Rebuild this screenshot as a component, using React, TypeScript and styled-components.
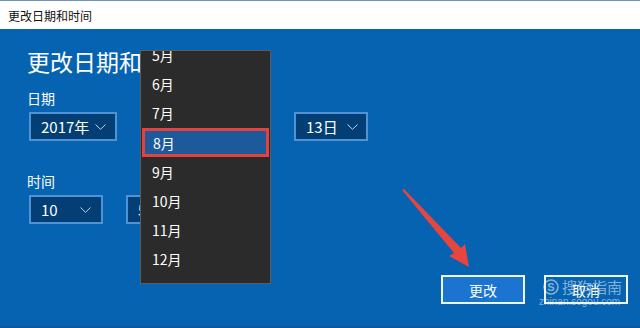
import styled, { createGlobalStyle } from 'styled-components';

const GlobalStyle = createGlobalStyle`
  html, body {
    margin: 0;
    padding: 0;
    width: 640px;
    height: 328px;
    overflow: hidden;
    font-family: "Noto Sans CJK SC", "Noto Sans", "Liberation Sans", sans-serif;
  }
`;

const Window = styled.div`
  position: relative;
  width: 640px;
  height: 328px;
  display: flex;
  flex-direction: column;
  background: #0563b2;
  box-sizing: border-box;
  border-top: 1px solid #6f95bd;
  border-bottom: 2px solid #0b58a0;
  overflow: hidden;
`;

const TitleBar = styled.div`
  height: 28px;
  flex: none;
  background: #ffffff;
  display: flex;
  align-items: center;
  padding-left: 8px;
  font-size: 12px;
  color: #111;
`;

const Body = styled.div`
  flex: 1;
  display: flex;
  flex-direction: column;
  padding: 17px 12px 22px 27px;
  color: #fff;
`;

const Heading = styled.div`
  font-size: 23px;
  line-height: 30px;
  white-space: nowrap;
`;

const Label = styled.div<{ $gap: number }>`
  margin-top: ${(p) => p.$gap}px;
  font-size: 14px;
  line-height: 20px;
`;

const Row = styled.div`
  margin: 4px 0 0 2px;
  display: flex;
  gap: 23px;
  position: relative;
`;

const Combo = styled.div<{ $w: number; $pad?: number }>`
  width: ${(p) => p.$w}px;
  height: 29px;
  box-sizing: border-box;
  border: 2px solid #4d93d6;
  background: #033f74;
  display: flex;
  align-items: center;
  justify-content: space-between;
  padding: 0 ${(p) => p.$pad ?? 9}px 0 10px;
  font-size: 15px;
  color: #fff;
`;

const Chevron = () => (
  <svg width="11" height="6" viewBox="0 0 11 6">
    <path d="M0.5 0.5 L5.5 5.3 L10.5 0.5" fill="none" stroke="#bcd3ea" strokeWidth="1" />
  </svg>
);

const Dropdown = styled.div`
  position: absolute;
  left: 140px;
  top: 49px;
  width: 131px;
  height: 234px;
  box-sizing: border-box;
  background: #2b2b2b;
  border: 1px solid #5d5d5d;
  overflow: hidden;
  z-index: 2;
`;

const List = styled.div`
  margin-top: -11px;
  display: flex;
  flex-direction: column;
`;

const Item = styled.div<{ $selected?: boolean }>`
  height: 29px;
  box-sizing: border-box;
  display: flex;
  align-items: center;
  font-size: 14px;
  color: #fff;
  padding-left: ${(p) => (p.$selected ? 8 : 11)}px;
  ${(p) =>
    p.$selected &&
    `
    margin: 1px 1px 0 1px;
    background: #1c5a9c;
    border: 3px solid #e6403f;
  `}
`;

const Footer = styled.div`
  margin-top: auto;
  display: flex;
  justify-content: flex-end;
  gap: 19px;
`;

const Button = styled.div<{ $primary?: boolean }>`
  width: 84px;
  height: 29px;
  box-sizing: border-box;
  border: 2px solid #eef4fb;
  background: ${(p) => (p.$primary ? '#1a74d0' : '#0563b2')};
  display: flex;
  align-items: center;
  justify-content: center;
  font-size: 14px;
  color: #fff;
`;

const Arrow = styled.svg`
  position: absolute;
  left: 0;
  top: 0;
  pointer-events: none;
  z-index: 3;
`;

const Watermark = styled.div`
  position: absolute;
  left: 543px;
  top: 277px;
  color: rgba(255, 255, 255, 0.5);
  z-index: 3;
  display: flex;
  flex-direction: column;
  align-items: flex-start;
  pointer-events: none;
`;

const MarkTop = styled.div`
  display: flex;
  align-items: center;
  gap: 3px;
  font-size: 15px;
  line-height: 18px;
`;

const MarkUrl = styled.div`
  font-family: "Liberation Sans", sans-serif;
  font-size: 10px;
  line-height: 11px;
  margin-left: -4px;
`;

const months = ['5月', '6月', '7月', '8月', '9月', '10月', '11月', '12月'];

export default function App() {
  return (
    <>
      <GlobalStyle />
      <Window>
        <TitleBar>更改日期和时间</TitleBar>
        <Body>
          <Heading>更改日期和时间</Heading>
          <Label $gap={12}>日期</Label>
          <Row>
            <Combo $w={88}>
              2017年 <Chevron />
            </Combo>
            <Combo $w={131}>
              8月 <Chevron />
            </Combo>
            <Combo $w={74} $pad={8}>
              13日 <Chevron />
            </Combo>
          </Row>
          <Label $gap={30}>时间</Label>
          <Row>
            <Combo $w={74} $pad={10}>
              10 <Chevron />
            </Combo>
            <Combo $w={74}>
              58 <Chevron />
            </Combo>
          </Row>
          <Footer>
            <Button $primary>更改</Button>
            <Button>取消</Button>
          </Footer>
        </Body>
        <Dropdown>
          <List>
            {months.map((m) => (
              <Item key={m} $selected={m === '8月'}>
                {m}
              </Item>
            ))}
          </List>
        </Dropdown>
        <Arrow width="640" height="328" viewBox="0 0 640 328">
          <polygon points="402,189 404,188 461,247 465,243 469,266 449,255 454,252" fill="#e8453e" />
        </Arrow>
        <Watermark>
          <MarkTop>
            <svg width="16" height="16" viewBox="0 0 16 16">
              <circle cx="8" cy="8" r="7" fill="none" stroke="currentColor" strokeWidth="1.6" />
              <text x="8" y="12" textAnchor="middle" fontSize="11" fontWeight="bold" fill="currentColor" fontFamily="Liberation Sans, sans-serif">S</text>
            </svg>
            搜狗指南
          </MarkTop>
          <MarkUrl>zhinan.sogou.com</MarkUrl>
        </Watermark>
      </Window>
    </>
  );
}
